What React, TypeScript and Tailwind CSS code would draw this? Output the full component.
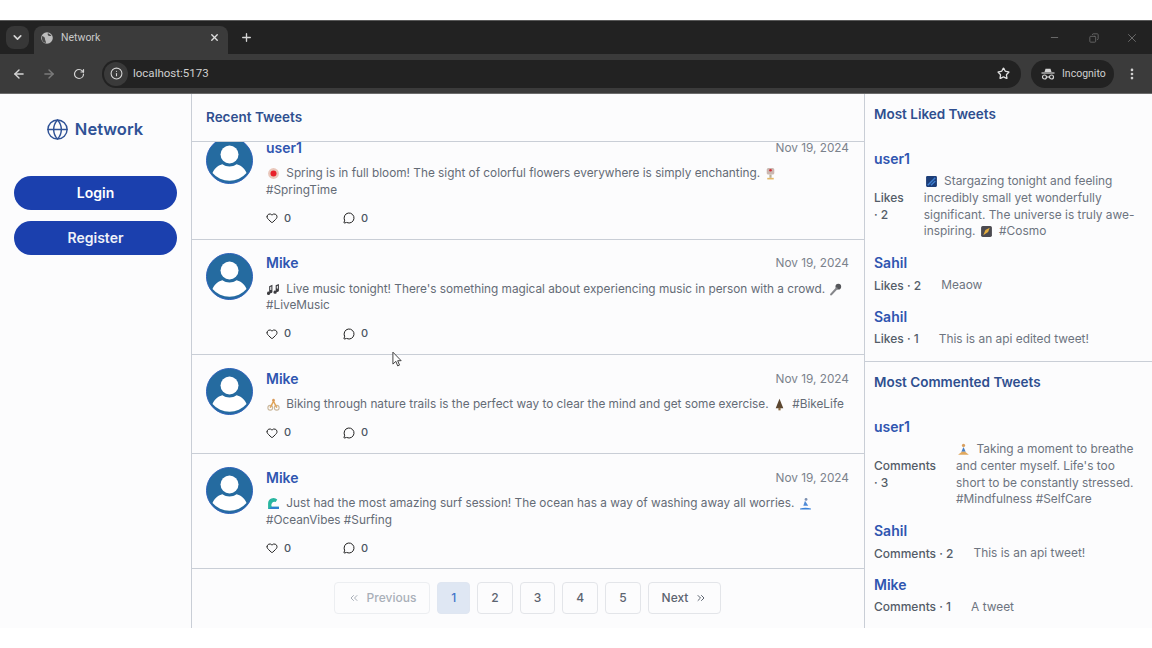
import React from 'react';
import {
  ArrowLeft, ArrowRight, ChevronDown, ChevronsLeft, ChevronsRight, Copy, EllipsisVertical, Globe, Heart,
  Info, MessageCircle, Minus, Plus, RotateCw, Star, X,
} from 'lucide-react';

type EmojiName = 'flower' | 'tulip' | 'notes' | 'mic' | 'bike' | 'tree' | 'wave' | 'surfer' | 'stars' | 'comet' | 'yoga';

// Small hand drawn stand-ins, no colour emoji font is available
const Emoji: React.FC<{ name: EmojiName }> = ({ name }) => {
  const shapes: Record<EmojiName, React.ReactNode> = {
    flower: (
      <>
        <circle cx="6" cy="6" r="5" fill="#e9c7bb" />
        <circle cx="6" cy="6" r="2.8" fill="#e8202a" />
      </>
    ),
    tulip: (
      <>
        <rect x="2.5" y="1" width="7" height="6" rx="1.5" fill="#cbb7b0" />
        <circle cx="6" cy="3" r="1.2" fill="#d2303a" />
        <rect x="5" y="7" width="2" height="3" fill="#b9b09a" />
        <rect x="3" y="10" width="6" height="1.5" fill="#e3b765" />
      </>
    ),
    notes: (
      <path d="M3 9.5a1.5 1.5 0 1 1-1-1.4V3l3-1.5v6.2a1.5 1.5 0 1 1-1-1.2V3.2L3 3.8zM9 8.5a1.5 1.5 0 1 1-1-1.4V2l3-1v5.5a1.5 1.5 0 1 1-1-1.2V2.6L9 3z" fill="#3c3c40" />
    ),
    mic: (
      <>
        <circle cx="8.6" cy="3.4" r="2.6" fill="#55565a" />
        <path d="M7 5 2 10.5" stroke="#85868a" strokeWidth="2" strokeLinecap="round" />
      </>
    ),
    bike: (
      <>
        <circle cx="3" cy="9" r="2.2" fill="none" stroke="#c9b69a" strokeWidth="1" />
        <circle cx="9" cy="9" r="2.2" fill="none" stroke="#c9b69a" strokeWidth="1" />
        <path d="M3 9 6 3l3 6" fill="none" stroke="#e0a458" strokeWidth="1.4" />
        <circle cx="6" cy="2" r="1.2" fill="#d99a5a" />
      </>
    ),
    tree: (
      <>
        <path d="M6 .8 9.5 9.5h-7z" fill="#5b4630" />
        <rect x="5" y="9" width="2" height="2.4" fill="#8c6a3f" />
      </>
    ),
    wave: (
      <>
        <path d="M1 11V6a5 5 0 0 1 8.5-3.6L8 4.5A3 3 0 0 0 4.5 9H11v2z" fill="#29b6a0" />
        <path d="M4.5 9H11v2H1.5z" fill="#2d7fd0" />
      </>
    ),
    surfer: (
      <>
        <circle cx="6.5" cy="2.2" r="1.3" fill="#7b8fb0" />
        <path d="M5.5 3.5 4 8h4.5z" fill="#4f8ad6" />
        <path d="M1 10.5c3-.8 7-.8 10 0v1H1z" fill="#3b82d8" />
      </>
    ),
    stars: (
      <>
        <rect x="1" y="1" width="10" height="10" rx="1" fill="#1c3d78" />
        <path d="M2.5 9.5 9.5 2.5M5.5 9.5l4-4" stroke="#3f7fd0" strokeWidth="1.3" />
      </>
    ),
    comet: (
      <>
        <rect x="1" y="1" width="10" height="10" rx="1.5" fill="#4b4a50" />
        <path d="M3 9.5 5 4.5l4-2-1.5 4z" fill="#e4ad3e" />
      </>
    ),
    yoga: (
      <>
        <circle cx="6" cy="2.2" r="1.5" fill="#d9a05f" />
        <path d="M6 3.8 4 8h4z" fill="#4a7fc4" />
        <path d="M1 10.8 4.5 8h3l3.5 2.8z" fill="#e0a85e" />
      </>
    ),
  };
  return (
    <svg viewBox="0 0 12 12" className="inline-block w-[13px] h-[13px] align-[-3px] mr-[3px] ml-[1px]">
      {shapes[name]}
    </svg>
  );
};

const Avatar = () => (
  <svg viewBox="0 0 47 47" className="w-[47px] h-[47px] shrink-0">
    <circle cx="23.5" cy="23.5" r="23" fill="#256ba0" stroke="#2b5fb8" strokeWidth="1" />
    <circle cx="23.5" cy="17.5" r="9" fill="#fff" />
    <path d="M6.5 36c2-6 8-8.5 10-8.8 4 3 10 3 14 0 2 .3 8 2.8 10 8.8a22.5 22.5 0 0 1-34 0z" fill="#fff" />
  </svg>
);

const TabFavicon = () => (
  <svg viewBox="0 0 12 12" className="w-[12px] h-[12px]">
    <circle cx="6" cy="6" r="5.8" fill="#bdbdbd" />
    <path d="M1 4c2 .3 3 1.5 3 3s1 2 1 4c-2.500-.3-4-2-4-4zM7 1c1 1 2 1.200 3.500 2.500-1 .7-2 .7-3 .2C6.500 3 6.500 2 7 1z" fill="#4a4a4a" />
  </svg>
);

const BrowserChrome = () => (
  <div className="shrink-0 bg-[#3b3b3b] border-t border-[#5a5a5a] border-b-[#6b6b6b] border-b text-[#d5d5d5]">
    <div className="h-[33px] bg-[#222222] flex items-end">
      <div className="w-[34px] h-[33px] flex items-center justify-center">
        <div className="w-[23px] h-[23px] rounded-lg bg-[#373737] flex items-center justify-center">
          <ChevronDown size={13} strokeWidth={3} />
        </div>
      </div>
      <div className="w-[194px] h-[28px] bg-[#3b3b3b] rounded-t-lg flex items-center pl-[7px] pr-[8px] pb-[5px]">
        <TabFavicon />
        <span className="ml-[8px] text-[10.5px] text-[#c9c9c9] font-['Roboto',sans-serif]">Network</span>
        <X size={11} strokeWidth={3} className="ml-auto text-[#dedede]" />
      </div>
      <div className="h-[33px] w-[36px] flex items-center justify-center">
        <Plus size={13} strokeWidth={2.5} />
      </div>
      <div className="ml-auto h-[33px] flex items-center text-[#6e6e6e]">
        <Minus size={11} className="mr-[29px]" />
        <Copy size={10} strokeWidth={2} className="mr-[26px] -scale-x-100" />
        <X size={14} strokeWidth={1.6} className="mr-[13px]" />
      </div>
    </div>
    <div className="h-[39px] flex items-center pl-[12px] pr-[12px]">
      <ArrowLeft size={14} strokeWidth={2.4} />
      <ArrowRight size={14} strokeWidth={2.4} className="ml-[16px] text-[#7b7b7b]" />
      <RotateCw size={12} strokeWidth={2.4} className="ml-[17px]" />
      <div className="ml-[17px] w-[919px] h-[28px] rounded-full bg-[#222222] flex items-center pl-[2px] pr-[11px]">
        <div className="w-[24px] h-[24px] rounded-full bg-[#3a3a3a] flex items-center justify-center">
          <Info size={13} strokeWidth={2} />
        </div>
        <span className="ml-[5px] text-[11.5px] text-[#d0d0d0] font-['Roboto',sans-serif]">localhost:5173</span>
        <Star size={13} strokeWidth={2.4} className="ml-auto text-[#e0e0e0]" />
      </div>
      <div className="ml-[10px] w-[83px] h-[28px] rounded-full bg-[#222222] flex items-center pl-[10px]">
        <svg viewBox="0 0 14 12" className="w-[14px] h-[12px] text-[#d5d5d5]" fill="none" stroke="currentColor">
          <path d="M3.500 4 4.500 .8h5L10.500 4z" fill="currentColor" stroke="none" />
          <path d="M.5 5h13" strokeWidth="1.2" />
          <circle cx="3.500" cy="9" r="2" strokeWidth="1.2" />
          <circle cx="10.500" cy="9" r="2" strokeWidth="1.2" />
          <path d="M5.500 9h3" strokeWidth="1.2" />
        </svg>
        <span className="ml-[7px] text-[10.5px] text-[#cfcfcf] font-['Roboto',sans-serif]">Incognito</span>
      </div>
      <EllipsisVertical size={14} strokeWidth={2.6} className="ml-[11px]" />
    </div>
  </div>
);

const Sidebar = () => (
  <aside className="w-[192px] shrink-0 border-r border-[#c9ced6] px-[14px] pt-[23px]">
    <div className="flex items-center justify-center gap-[6px] pr-[2px] text-[#2f5296] h-[24px] mb-[35px]">
      <Globe size={23} strokeWidth={1.5} />
      <span className="text-[16.5px] font-semibold">Network</span>
    </div>
    <div className="flex flex-col gap-[11px]">
      <button className="h-[34px] pb-[2px] rounded-full bg-[#1b40ae] text-white text-[14px] font-semibold">Login</button>
      <button className="h-[34px] pb-[2px] rounded-full bg-[#1b40ae] text-[#eef1f8] text-[14px] font-semibold">Register</button>
    </div>
  </aside>
);

interface TweetProps {
  name: string;
  children: React.ReactNode;
  className?: string;
}

const Tweet: React.FC<TweetProps> = ({ name, children, className = '' }) => (
  <article className={`flex gap-[13px] pl-[14px] pr-[15px] pt-[13px] pb-[12.5px] border-b border-[#c9ced6] ${className}`}>
    <Avatar />
    <div className="flex-1 min-w-0">
      <div className="flex items-center justify-between h-[20px]">
        <span className="text-[14px] font-semibold text-[#2f55b0]">{name}</span>
        <span className="mt-[3px] text-[11.8px] text-[#7b828c]">Nov 19, 2024</span>
      </div>
      <p className="mt-[8px] text-[11.8px] leading-[16.5px] text-[#646b76]">{children}</p>
      <div className="mt-[12px] flex items-center h-[16px] text-[11px] font-medium text-[#4b5563]">
        <span className="w-[77px] flex items-center gap-[6px]">
          <Heart size={12} strokeWidth={2} className="text-[#222]" />0
        </span>
        <span className="flex items-center gap-[6px]">
          <MessageCircle size={12} strokeWidth={2} className="text-[#222]" />0
        </span>
      </div>
    </div>
  </article>
);

const PageButton: React.FC<{ children: React.ReactNode; className?: string }> = ({ children, className = '' }) => (
  <button className={`h-[32px] px-[13px] flex items-center gap-[7px] rounded-[4px] border text-[12px] font-medium ${className}`}>
    {children}
  </button>
);

const Feed = () => (
  <main className="w-[673px] shrink-0 border-r border-[#c9ced6] flex flex-col min-h-0">
    <h2 className="h-[48px] shrink-0 pl-[14px] pt-[13px] border-b border-[#c9ced6] text-[13.5px] font-semibold text-[#2f4f8f]">
      Recent Tweets
    </h2>
    <div className="h-[427px] shrink-0 overflow-hidden border-b border-[#c9ced6]">
      <div className="-mt-[18px]">
        <Tweet name="user1">
          <Emoji name="flower" /> Spring is in full bloom! The sight of colorful flowers everywhere is simply enchanting. <Emoji name="tulip" />
          <br />
          #SpringTime
        </Tweet>
        <Tweet name="Mike">
          <Emoji name="notes" /> Live music tonight! There's something magical about experiencing music in person with a crowd. <Emoji name="mic" />
          <br />
          #LiveMusic
        </Tweet>
        <Tweet name="Mike">
          <Emoji name="bike" /> Biking through nature trails is the perfect way to clear the mind and get some exercise. <Emoji name="tree" /> #BikeLife
        </Tweet>
        <Tweet name="Mike" className="border-b-0">
          <Emoji name="wave" /> Just had the most amazing surf session! The ocean has a way of washing away all worries. <Emoji name="surfer" />
          <br />
          #OceanVibes #Surfing
        </Tweet>
      </div>
    </div>
    <nav className="flex-1 flex items-start justify-center gap-[7px] pt-[13px] pr-[1px]">
      <PageButton className="border-[#eceef1] text-[#a9afb8]">
        <ChevronsLeft size={12} />
        Previous
      </PageButton>
      <PageButton className="border-[#dfe6f1] bg-[#dfe7f3] text-[#3f74c9]">1</PageButton>
      <PageButton className="border-[#e3e5e9] text-[#5c6470]">2</PageButton>
      <PageButton className="border-[#e3e5e9] text-[#5c6470]">3</PageButton>
      <PageButton className="border-[#e3e5e9] text-[#5c6470]">4</PageButton>
      <PageButton className="border-[#e3e5e9] text-[#5c6470]">5</PageButton>
      <PageButton className="border-[#e3e5e9] text-[#5c6470]">
        Next
        <ChevronsRight size={12} />
      </PageButton>
    </nav>
  </main>
);

interface TopItemProps {
  name: string;
  label: string;
  stacked?: boolean;
  children: React.ReactNode;
}

const TopItem: React.FC<TopItemProps> = ({ name, label, stacked, children }) => (
  <div className="mb-[13px]">
    <div className="text-[14px] leading-[20px] font-semibold text-[#2f55b0]">{name}</div>
    <div className="mt-[3px] flex items-center gap-[20px]">
      <span className={`shrink-0 text-[12px] leading-[17px] font-medium text-[#545c68] ${stacked ? 'w-min' : ''}`}>{label}</span>
      <p className="pt-[1px] text-[11.9px] leading-[16.8px] text-[#6d7480]">{children}</p>
    </div>
  </div>
);

const RightPanel = () => (
  <aside className="flex-1 min-w-0 flex flex-col">
    <section className="h-[268px] shrink-0 border-b border-[#c9ced6] pl-[9px] pr-[12px] pt-[10px]">
      <h3 className="text-[13.5px] leading-[20px] font-semibold text-[#2f4f8f] mb-[25px]">Most Liked Tweets</h3>
      <TopItem name="user1" label="Likes · 2" stacked>
        <Emoji name="stars" /> Stargazing tonight and feeling incredibly small yet wonderfully significant. The universe is truly awe-inspiring. <Emoji name="comet" /> #Cosmo
      </TopItem>
      <TopItem name="Sahil" label="Likes · 2">Meaow</TopItem>
      <TopItem name="Sahil" label="Likes · 1">This is an api edited tweet!</TopItem>
    </section>
    <section className="flex-1 pl-[9px] pr-[12px] pt-[10px]">
      <h3 className="text-[13.5px] leading-[20px] font-semibold text-[#2f4f8f] mb-[25px]">Most Commented Tweets</h3>
      <TopItem name="user1" label="Comments · 3" stacked>
        <Emoji name="yoga" /> Taking a moment to breathe and center myself. Life's too short to be constantly stressed. #Mindfulness #SelfCare
      </TopItem>
      <TopItem name="Sahil" label="Comments · 2">This is an api tweet!</TopItem>
      <TopItem name="Mike" label="Comments · 1">A tweet</TopItem>
    </section>
  </aside>
);

export default function App() {
  return (
    <div className="relative w-[1152px] h-[648px] overflow-hidden bg-white pt-[20px] pb-[20px] flex flex-col font-['Inter',sans-serif]">
      <BrowserChrome />
      <div className="flex-1 min-h-0 flex bg-[#fcfcfd]">
        <Sidebar />
        <Feed />
        <RightPanel />
      </div>
      {/* Mouse pointer caught in the capture */}
      <svg viewBox="0 0 12 18" className="absolute left-[392px] top-[351px] w-[11px] h-[17px]">
        <path d="M1 1v13l3.200-3 2 5 2-.9-2-4.800H10z" fill="#fff" stroke="#333" strokeWidth="1" />
      </svg>
    </div>
  );
}
